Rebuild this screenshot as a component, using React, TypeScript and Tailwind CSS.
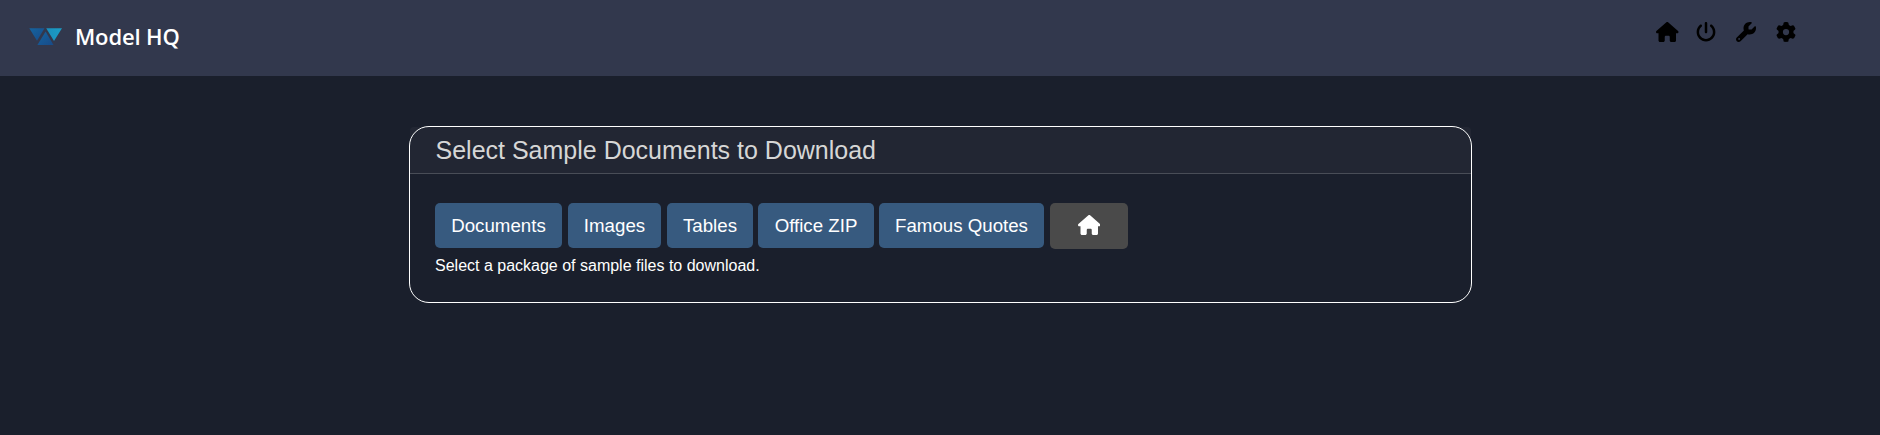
import { FaHouse, FaPowerOff, FaWrench, FaGear } from "react-icons/fa6";

const packages = [
  { label: "Documents", box: "w-[127px] mr-[6px]" },
  { label: "Images", box: "w-[93px] mr-[6px]" },
  { label: "Tables", box: "w-[86px] mr-[5px]" },
  { label: "Office ZIP", box: "w-[116px] mr-[5px]" },
  { label: "Famous Quotes", box: "w-[165px] mr-[6px]" },
];

function Logo() {
  return (
    <svg width="34" height="18" viewBox="0 0 34 18" className="block">
      <defs>
        <linearGradient id="blue" x1="0" y1="0" x2="1" y2="1">
          <stop offset="0" stopColor="#15649f" />
          <stop offset="1" stopColor="#184a88" />
        </linearGradient>
        <linearGradient id="teal" x1="0" y1="0" x2="1" y2="0">
          <stop offset="0" stopColor="#1a90bd" />
          <stop offset="1" stopColor="#1b9cc4" />
        </linearGradient>
      </defs>
      <path d="M0.3 0.3H15.5L8 12.8Z" fill="url(#blue)" />
      <path d="M16.6 3.6L24.5 17H8.4Z" fill="url(#blue)" />
      <path d="M17.2 0.3H33L25 12.9Z" fill="url(#teal)" />
    </svg>
  );
}

export default function App() {
  return (
    <div className="h-[435px] bg-[#1a1f2c] font-['Liberation_Sans',Arial,sans-serif]">
      <header className="flex h-[76px] items-start justify-between bg-[#32384d] pr-[84px] pl-[29px]">
        <div className="flex pt-[28px]">
          <Logo />
          <h1 className="-mt-[7px] ml-[12px] text-[22px] leading-[30px] font-semibold tracking-[-0.15px] whitespace-nowrap text-white font-['Open_Sans','Noto_Sans',sans-serif]">
            Model HQ
          </h1>
        </div>
        <nav className="flex pt-[21.5px] text-black">
          <FaHouse className="mr-[17.5px] h-5 w-[22.5px]" />
          <FaPowerOff className="mr-5 size-5" />
          <FaWrench className="mr-5 size-5" />
          <FaGear className="size-5" />
        </nav>
      </header>

      <main className="mt-[50px] ml-[409px] h-[177px] w-[1063px] rounded-[20px] border border-white">
        <div className="h-[47px] rounded-t-[4px] border-b border-white/18 bg-white/[0.035] pl-[25.5px]">
          <h2 className="text-[25px] leading-[46px] whitespace-nowrap text-[#d6d6d6]">
            Select Sample Documents to Download
          </h2>
        </div>
        <div className="pt-[29px] pl-[25px]">
          <div className="flex h-[46px] items-start">
            {packages.map((p) => (
              <button
                key={p.label}
                className={`h-[45px] shrink-0 rounded-[5px] bg-[#375a7f] text-[18.7px] leading-[45px] whitespace-nowrap text-white ${p.box}`}
              >
                {p.label}
              </button>
            ))}
            <button className="flex h-[46px] w-[78px] items-center justify-center rounded-[5px] bg-[#4a4a4a] pb-[2px] text-white">
              <FaHouse className="h-5 w-[22.5px]" />
            </button>
          </div>
          <p className="mt-[5px] text-base leading-6 text-white">Select a package of sample files to download.</p>
        </div>
      </main>
    </div>
  );
}
